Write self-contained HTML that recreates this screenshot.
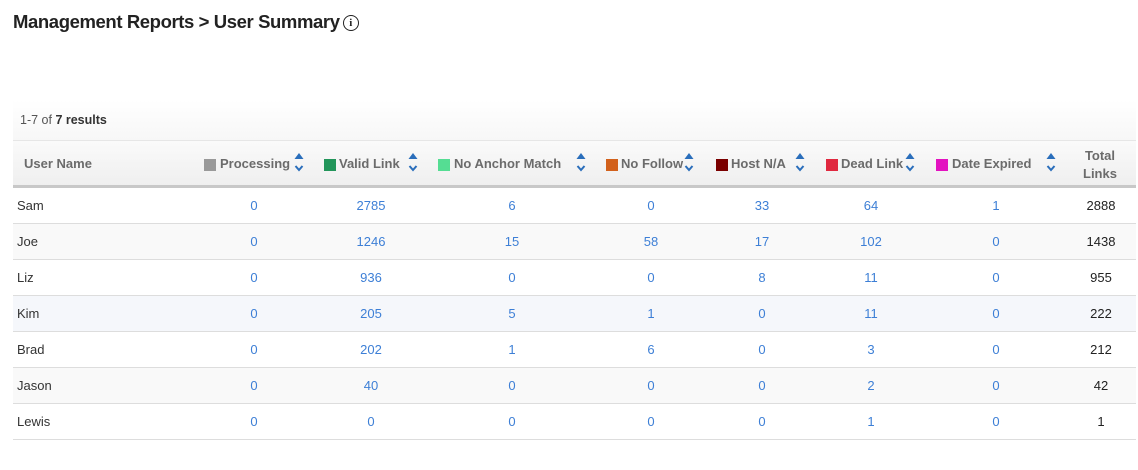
<!DOCTYPE html>
<html><head><meta charset="utf-8"><style>
body{margin:0;width:1138px;height:470px;background:#fff;font-family:"Liberation Sans",sans-serif;position:relative;overflow:hidden}
.a{position:absolute;white-space:nowrap}
h1{position:absolute;left:13px;top:11px;margin:0;font-size:18.5px;font-weight:bold;color:#222;letter-spacing:-0.4px}
.info{display:inline-block;width:14px;height:14px;border:1.5px solid #222;border-radius:50%;font-size:11px;line-height:14px;text-align:center;font-family:"Liberation Serif",serif;font-weight:bold;vertical-align:2px;margin-left:3px}
.tb{position:absolute;left:13px;top:100px;width:1123px;height:40px;background:linear-gradient(#fff,#f7f7f7);border-bottom:1px solid #e6e6e6}
.hd{position:absolute;left:13px;top:141px;width:1123px;height:44px;background:linear-gradient(#fafafa,#efefef);border-bottom:3px solid #c8c8c8}
.h{font-size:13px;font-weight:bold;color:#6b6b6b;top:156px}
.sq{position:absolute;width:12px;height:12px;top:159px}
.ar{position:absolute;width:10px;height:20px;top:152px}
.row{position:absolute;left:13px;width:1123px;height:35px;border-bottom:1px solid #ddd}
.c{position:absolute;font-size:13px;color:#3d7fd6;transform:translateX(-50%)}
.n{position:absolute;left:4px;font-size:13px;color:#333}
.t{color:#222}
</style></head><body>
<h1>Management Reports &gt; User Summary<span class="info">i</span></h1>
<div class="tb"></div>
<div class="a" style="left:20px;top:113px;font-size:12.5px;color:#555">1-7 of <b style="color:#333">7 results</b></div>
<div class="hd"></div>
<div class="a h" style="left:24px">User Name</div>
<svg width="0" height="0" style="position:absolute"><defs><g id="ar"><path d="M0.5 7 L5 1 L9.5 7 Z" fill="#2a6ebb"/><path d="M1.5 14 L5 18 L8.5 14" fill="none" stroke="#2a6ebb" stroke-width="2"/></g></defs></svg>
<div class="sq" style="left:204px;background:#999"></div><div class="a h" style="left:220px">Processing</div><svg class="ar" style="left:294px"><use href="#ar"/></svg>
<div class="sq" style="left:324px;background:#22955a"></div><div class="a h" style="left:339px">Valid Link</div><svg class="ar" style="left:408px"><use href="#ar"/></svg>
<div class="sq" style="left:438px;background:#55dd93"></div><div class="a h" style="left:454px">No Anchor Match</div><svg class="ar" style="left:576px"><use href="#ar"/></svg>
<div class="sq" style="left:606px;background:#d2611c"></div><div class="a h" style="left:621px">No Follow</div><svg class="ar" style="left:684px"><use href="#ar"/></svg>
<div class="sq" style="left:716px;background:#7a0000"></div><div class="a h" style="left:731px">Host N/A</div><svg class="ar" style="left:795px"><use href="#ar"/></svg>
<div class="sq" style="left:826px;background:#e0283f"></div><div class="a h" style="left:841px">Dead Link</div><svg class="ar" style="left:905px"><use href="#ar"/></svg>
<div class="sq" style="left:936px;background:#e312c0"></div><div class="a h" style="left:952px">Date Expired</div><svg class="ar" style="left:1046px"><use href="#ar"/></svg>
<div class="a h" style="left:1083px;top:147px;text-align:center;line-height:18px">Total<br>Links</div>

<div class="row" style="top:188px"><div class="n" style="top:10px">Sam</div></div>
<div class="row" style="top:224px;background:#f9f9f9"><div class="n" style="top:10px">Joe</div></div>
<div class="row" style="top:260px"><div class="n" style="top:10px">Liz</div></div>
<div class="row" style="top:296px;background:#f5f7fb"><div class="n" style="top:10px">Kim</div></div>
<div class="row" style="top:332px"><div class="n" style="top:10px">Brad</div></div>
<div class="row" style="top:368px;background:#f9f9f9"><div class="n" style="top:10px">Jason</div></div>
<div class="row" style="top:404px"><div class="n" style="top:10px">Lewis</div></div>

<div id="cells"></div>
<script>
var d=[[0,2785,6,0,33,64,1,2888],[0,1246,15,58,17,102,0,1438],[0,936,0,0,8,11,0,955],[0,205,5,1,0,11,0,222],[0,202,1,6,0,3,0,212],[0,40,0,0,0,2,0,42],[0,0,0,0,0,1,0,1]];
var x=[254,371,512,651,762,871,996,1101],h='';
d.forEach(function(r,i){r.forEach(function(v,j){h+='<div class="c'+(j==7?' t':'')+'" style="left:'+x[j]+'px;top:'+(198+36*i)+'px">'+v+'</div>';});});
document.getElementById('cells').innerHTML=h;
</script>
</body></html>
